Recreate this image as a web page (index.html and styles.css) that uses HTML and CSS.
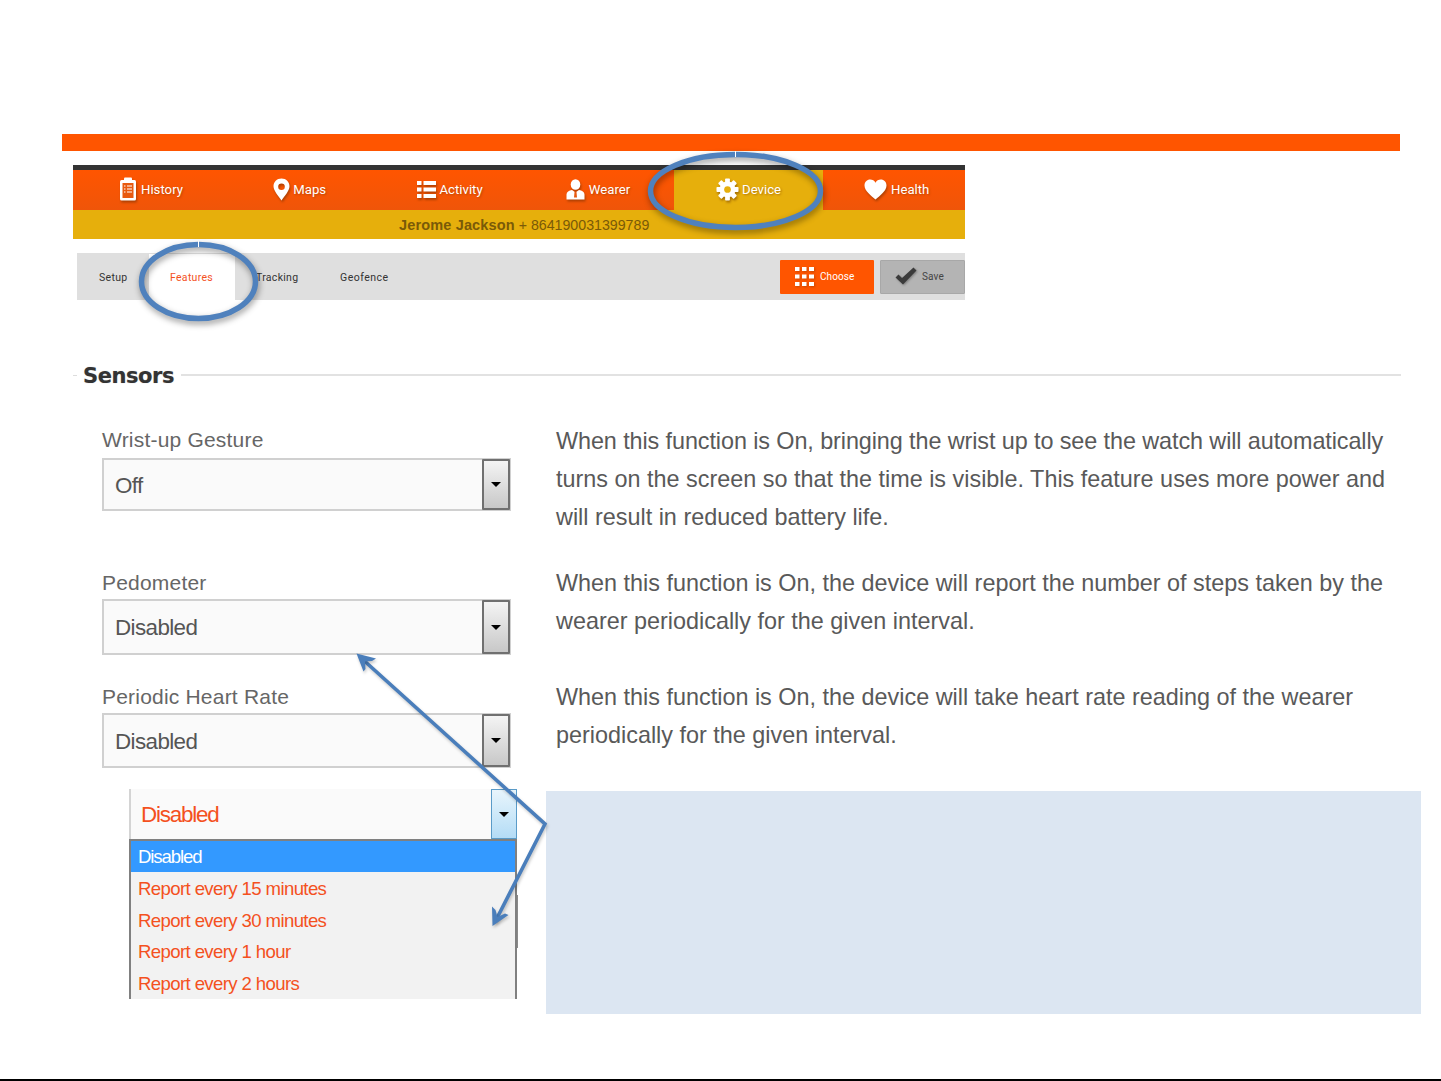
FILE: index.html
```html
<!DOCTYPE html>
<html lang="en">
<head>
<meta charset="utf-8">
<title>Sensors</title>
<link rel="stylesheet" href="styles.css">
</head>
<body>
<div class="slide">
  <div class="band"></div>
  <div class="app">
    <nav class="nav">
      <a class="nav-item p-history">
        <svg class="ico" width="18" height="24" viewBox="0 0 18 24"><rect x="1" y="3" width="16" height="20.500" rx="1.500" fill="#fff"/><rect x="5" y="0.500" width="8" height="4" rx="1" fill="#fff"/><rect x="3.500" y="6" width="11" height="15" fill="#e85a10"/><path d="M5 9h1.500M8 9h5M5 12h1.500M8 12h5M5 15h1.500M8 15h5" stroke="#fff" stroke-width="1.200"/></svg>
        <span>History</span>
      </a>
      <a class="nav-item p-maps">
        <svg class="ico" width="17" height="23" viewBox="0 0 17 23"><path fill-rule="evenodd" d="M8.500 0.500C3.900 0.500 0.500 4 0.500 8.300c0 4.700 5 9.700 8 14.200 3-4.500 8-9.500 8-14.200C16.500 4 13.100 0.500 8.500 0.500zm0 5a3.300 3.300 0 1 1 0 6.600 3.300 3.300 0 0 1 0-6.600z" fill="#fff"/></svg>
        <span>Maps</span>
      </a>
      <a class="nav-item p-activity">
        <svg class="ico" width="19" height="19" viewBox="0 0 19 19"><path d="M0 1h4.500v4H0zM6.500 1H19v4H6.500zM0 7.500h4.500v4H0zM6.500 7.500H19v4H6.500zM0 14h4.500v4H0zM6.500 14H19v4H6.500z" fill="#fff"/></svg>
        <span>Activity</span>
      </a>
      <a class="nav-item p-wearer">
        <svg class="ico" width="19" height="21" viewBox="0 0 19 21"><ellipse cx="9.500" cy="5.500" rx="4.800" ry="5.300" fill="#fff"/><path d="M0.500 20.500v-5c0-2.500 2.500-4 5.500-4.500l3.500 2.500 3.500-2.500c3 .5 5.500 2 5.500 4.500v5z" fill="#fff"/><path d="M8.500 13h2l.5 5.500h-3z" fill="#e85a10"/></svg>
        <span>Wearer</span>
      </a>
      <a class="nav-item p-device is-active">
        <svg class="ico" width="23" height="23" viewBox="-12 -12 24 24"><g fill="#fff"><rect x="-2.500" y="-11.500" width="5" height="23" rx=".8"/><rect x="-2.500" y="-11.500" width="5" height="23" rx=".8" transform="rotate(45)"/><rect x="-2.500" y="-11.500" width="5" height="23" rx=".8" transform="rotate(90)"/><rect x="-2.500" y="-11.500" width="5" height="23" rx=".8" transform="rotate(135)"/><circle r="8.300"/></g><circle r="3.500" fill="#e6af0c"/></svg>
        <span>Device</span>
      </a>
      <a class="nav-item p-health">
        <svg class="ico" width="23" height="21" viewBox="0 0 23 21"><path d="M11.500 20.500C7 16.500 0.500 12 0.500 6.500 0.500 3 3 0.500 6.200 0.500c2.300 0 4.200 1.200 5.300 3.200C12.600 1.700 14.500 0.500 16.800 0.500 20 0.500 22.500 3 22.500 6.500c0 5.500-6.500 10-11 14z" fill="#fff"/></svg>
        <span>Health</span>
      </a>
    </nav>
    <div class="who"><b>Jerome Jackson</b> + 864190031399789</div>
    <div class="toolbar">
      <a class="tab tab-setup">Setup</a>
      <a class="tab tab-features">Features</a>
      <a class="tab tab-tracking">Tracking</a>
      <a class="tab tab-geofence">Geofence</a>
      <a class="btn btn-choose">
        <svg class="ico" width="19" height="19" viewBox="0 0 19 19"><path d="M0 0h4.500v4H0zM7 0h4.500v4H7zM14 0h5v4h-5zM0 7.500h4.500v4H0zM7 7.500h4.500v4H7zM14 7.500h5v4h-5zM0 15h4.500v4H0zM7 15h4.500v4H7zM14 15h5v4h-5z" fill="#fff"/></svg>
        <span>Choose</span>
      </a>
      <a class="btn btn-save">
        <svg class="ico-dark" width="22" height="18" viewBox="0 0 22 18"><path d="M0.500 10.500l3-3 3.500 3.500L18.500 0.500l3 3L8 17.500z" fill="#3b3b3b"/></svg>
        <span>Save</span>
      </a>
    </div>
  </div>

  <div class="legend"><i class="legend-tick"></i><h2>Sensors</h2><i class="legend-line"></i></div>

  <div class="form">
    <div class="row row-wrist">
      <div class="field">
        <label class="lbl">Wrist-up Gesture</label>
        <div class="sel"><span>Off</span><i class="sel-btn"><i class="tri"></i></i></div>
      </div>
      <p class="desc desc-first"><span class="tight">When this function is On, bringing the wrist up to see the watch will automatically</span> turns on the screen so that the time is visible. This feature uses more power and will result in reduced battery life.</p>
    </div>
    <div class="row row-pedo">
      <div class="field">
        <label class="lbl">Pedometer</label>
        <div class="sel sel-tall"><span>Disabled</span><i class="sel-btn"><i class="tri"></i></i></div>
      </div>
      <p class="desc">When this function is On, the device will report the number of steps taken by the wearer periodically for the given interval.</p>
    </div>
    <div class="row row-heart">
      <div class="field">
        <label class="lbl">Periodic Heart Rate</label>
        <div class="sel sel-tall2"><span>Disabled</span><i class="sel-btn"><i class="tri"></i></i></div>
      </div>
      <p class="desc">When this function is On, the device will take heart rate reading of the wearer periodically for the given interval.</p>
    </div>
  </div>

  <div class="lower">
    <div class="drop">
      <div class="drop-head"><span>Disabled</span><i class="drop-btn"><i class="tri"></i></i></div>
      <ul class="drop-list">
        <li class="is-sel">Disabled</li>
        <li>Report every 15 minutes</li>
        <li>Report every 30 minutes</li>
        <li>Report every 1 hour</li>
        <li>Report every 2 hours</li>
      </ul>
    </div>
    <div class="note"></div>
  </div>

  <svg class="overlay" width="1441" height="1081" viewBox="0 0 1441 1081">
    <g class="shade" fill="none" stroke="#4f81bd" stroke-width="5.500">
      <ellipse cx="735.500" cy="191" rx="85" ry="36.500"/>
      <ellipse cx="198.500" cy="281.500" rx="57" ry="37"/>
    </g>
    <path d="M735.500 151v6M198.500 241v6" stroke="#fff" stroke-width="1"/>
    <g class="shade-sm" fill="none" stroke="#4a7ebb" stroke-width="3.600">
      <path d="M360 657L545 824L495 922"/>
    </g>
    <g class="shade-sm" fill="#4a7ebb">
      <path d="M356.500 653.500L376 658.500L372 661L365 661.500L365.500 669L363.500 671.500z"/>
      <path d="M492.500 926L492 906.500L495.500 910L497.500 917L505 913.500L508.500 915z"/>
    </g>
  </svg>
</div>
</body>
</html>
```

FILE: styles.css
```css
* { box-sizing: border-box; }
html, body { margin: 0; padding: 0; background: #fff; }
body { width: 1441px; height: 1081px; overflow: hidden; font-family: "Liberation Sans", Arial, sans-serif; }

.slide { position: relative; width: 1441px; height: 1081px; padding-top: 134px; border-bottom: 2px solid #000; }

.band { height: 17px; margin: 0 41px 0 62px; background: #ff5500; }

.app { width: 892px; margin: 14px 0 0 73px; }

.nav { display: grid; grid-template-columns: repeat(4, 150.250px) 149px 142px; height: 45px; border-top: 5px solid #333; background: linear-gradient(#ff5500, #ef5509); }
.nav-item { display: flex; align-items: center; gap: 4px; padding-bottom: 2px; color: #fff; font-family: Roboto, "Liberation Sans", sans-serif; font-size: 13.200px; text-shadow: 1px 1px 2px rgba(120, 50, 0, .45); }
.nav-item .ico { flex: none; filter: drop-shadow(1px 2px 1px rgba(90, 40, 0, .45)); }
.p-history { padding-left: 46px; }
.p-maps { padding-left: 50px; gap: 3px; }
.p-activity { padding-left: 43px; }
.p-wearer { padding-left: 42px; }
.p-device { padding-left: 42px; gap: 3px; }
.p-health { padding-left: 41px; }
.is-active { background: #e6af0c; }

.who { height: 29px; background: #e6af0c; color: #7a5a08; font-size: 14.200px; line-height: 30px; padding-left: 326px; }
.who b { font-size: 14.500px; letter-spacing: .15px; }

.toolbar { display: flex; align-items: flex-start; height: 47px; margin: 14px 0 0 4px; background: #dfdfdf; font-family: Roboto, "Liberation Sans", sans-serif; font-size: 10.500px; letter-spacing: .3px; color: #333; }
.tab { display: block; height: 47px; line-height: 49px; }
.tab-setup { width: 72px; padding-left: 22px; }
.tab-features { width: 86px; height: 46px; margin-top: 1px; padding-left: 21px; line-height: 47px; background: #fff; color: #f4511e; }
.tab-tracking { width: 105px; padding-left: 21px; }
.tab-geofence { width: 440px; padding-left: 0; letter-spacing: .5px; }
.btn { display: flex; align-items: center; flex: none; height: 34px; margin-top: 7px; padding-bottom: 2px; font-size: 10px; letter-spacing: .1px; border-radius: 1px; }
.btn-choose { width: 94px; padding-left: 15px; gap: 6px; background: #ff5500; color: #fff; }
.btn-save { width: 85px; margin-left: 6px; padding-left: 14px; gap: 5px; background: #b4b4b4; border: 1px solid #a8a8a8; color: #444; }
.btn-choose .ico { filter: drop-shadow(1px 1px 1px rgba(120, 50, 0, .4)); }
.ico-dark { filter: drop-shadow(1px 1px 1px rgba(0, 0, 0, .3)); }

.legend { display: flex; align-items: center; height: 26px; margin: 62px 40px 0 73px; }
.legend-tick { width: 4px; height: 1px; background: #ddd; }
.legend h2 { margin: 2px 7px 0 6px; font: bold 21px/26px "DejaVu Sans", Verdana, sans-serif; color: #333; letter-spacing: -.45px; text-shadow: 0 0 1px rgba(0, 0, 0, .3); }
.legend-line { flex: 1; height: 2px; background: #e2e2e2; }

.form { margin: 40px 0 0 102px; }
.row { display: grid; grid-template-columns: 409px 845px; column-gap: 45px; }
.row-wrist { height: 143px; }
.row-pedo { height: 114px; }
.row-heart { height: 104px; }

.lbl { display: block; height: 30px; font-size: 21px; letter-spacing: .2px; line-height: 24px; color: #666; }
.sel { display: flex; align-items: center; justify-content: space-between; height: 53px; padding: 2px 0 0 11px; background: #fafafa; border: 2px solid #d0d0d0; font-size: 22.400px; letter-spacing: -.6px; color: #555; }
.sel-tall { height: 56px; margin-top: -2px; }
.sel-tall2 { height: 55px; margin-top: -2px; }
.sel-btn { display: flex; align-items: center; justify-content: center; flex: none; width: 28px; align-self: stretch; margin: -3px -1px -1px 0; background: linear-gradient(#f4f4f4, #c8c8c8); border: 2px solid #707070; border-radius: 1px; }
.tri { width: 0; height: 0; border-style: solid; border-width: 5px 5.500px 0; border-color: #000 transparent transparent; }

.desc { margin: -7px 0 0; font-size: 23.400px; line-height: 38px; color: #595959; }
.desc-first { margin-top: -6px; }
.tight { letter-spacing: -.09px; }

.lower { display: flex; align-items: flex-start; margin-left: 129px; }
.drop { position: relative; width: 388px; height: 210px; flex: none; }
.drop::after { content: ""; position: absolute; top: 106px; right: -1px; width: 1px; height: 53px; background: #8a8a8a; }
.drop-head { display: flex; align-items: center; justify-content: space-between; height: 50px; padding: 2px 0 0 10px; background: #fafafa; border-left: 2px solid #d4d4d4; font-size: 22.400px; letter-spacing: -1.200px; color: #f4511e; }
.drop-btn { display: flex; align-items: center; justify-content: center; flex: none; width: 26px; height: 50px; margin-top: -2px; background: linear-gradient(#e8f5fc, #b4dcf6); border: 1px solid #5a9bc8; }
.drop-list { height: 160px; margin: 0; padding: 0; overflow: hidden; list-style: none; border-left: 2px solid #808080; border-right: 2px solid #808080; border-top: 2px solid #808080; background: #f2f2f2; font-size: 18.600px; letter-spacing: -.62px; color: #f4511e; }
.drop-list li { height: 31.500px; padding-left: 7px; line-height: 34px; }
.drop-list .is-sel { height: 31px; line-height: 32px; background: #3399ff; color: #fff; letter-spacing: -1.100px; }

.note { width: 875px; height: 223px; margin: 2px 0 0 29px; background: #dce6f2; }

.overlay { position: absolute; top: 0; left: 0; pointer-events: none; }
.shade { filter: drop-shadow(1px 3px 3px rgba(0, 0, 0, .4)); }
.shade-sm { filter: drop-shadow(1px 2px 1.500px rgba(0, 0, 0, .22)); }
```
